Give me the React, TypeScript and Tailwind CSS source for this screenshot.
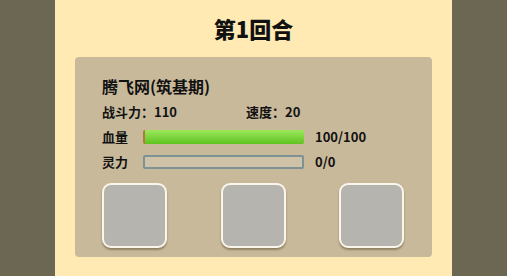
import React from "react";

const font = {
  fontFamily: '"Noto Sans CJK SC", "Noto Sans", sans-serif',
};

function Bar({ value, max, fill }: { value: number; max: number; fill: boolean }) {
  return (
    <div className="flex items-center gap-[11px]">
      <div
        className={`h-[14px] w-[161px] rounded-[2px] ${
          fill
            ? "border-l-2 border-[#b07a3a] bg-gradient-to-b from-[#9be85a] to-[#5ec21c]"
            : "border-2 border-[#7c9294] bg-[#cfc2a6]"
        }`}
      />
      <span className="text-[13px] font-bold text-[#111]">
        {value}/{max}
      </span>
    </div>
  );
}

function Slot() {
  return (
    <div className="h-[65px] w-[65px] rounded-[9px] border-2 border-[#fbf6ec] bg-[#b5b4ae] shadow-[0_2px_2px_rgba(80,60,30,0.45)]" />
  );
}

export default function App() {
  return (
    <div className="flex h-[276px] w-full justify-center bg-[#6b6753]" style={font}>
      <div className="flex w-[397px] flex-col bg-[#ffeab4] px-[20px]">
        <h1 className="flex h-[57px] items-center justify-center pb-[2px] text-[22px] font-black leading-none text-[#111]">
          第1回合
        </h1>
        <div className="flex h-[200px] flex-col rounded-[4px] bg-[#c9b99b] pl-[27px] pr-[28px] pt-[16px]">
          <div className="text-[16px] font-bold leading-[26px] text-[#111]">腾飞网(筑基期)</div>
          <div className="mt-[3px] flex text-[13px] font-bold leading-[20px] text-[#111]">
            <span className="w-[144px]">战斗力：110</span>
            <span>速度：20</span>
          </div>
          <div className="mt-[4px] flex h-[22px] items-center text-[13px] font-bold text-[#111]">
            <span className="w-[41px]">血量</span>
            <Bar value={100} max={100} fill />
          </div>
          <div className="mt-[3px] flex h-[22px] items-center text-[13px] font-bold text-[#111]">
            <span className="w-[41px]">灵力</span>
            <Bar value={0} max={0} fill={false} />
          </div>
          <div className="mt-[10px] flex justify-between">
            <Slot />
            <Slot />
            <Slot />
          </div>
        </div>
      </div>
    </div>
  );
}
